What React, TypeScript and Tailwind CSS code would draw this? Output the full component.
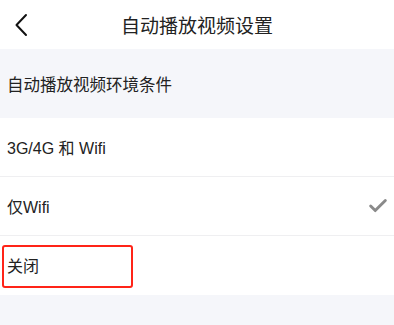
import { Check } from 'lucide-react';

const font = { fontFamily: '"Liberation Sans", "Noto Sans CJK SC", sans-serif' };

export default function App() {
  return (
    <div className="relative h-[325px] w-[394px] overflow-hidden bg-[#f5f6fa] text-[#222]" style={font}>
      <header className="relative flex h-[49px] items-center justify-center bg-white pt-[3px]">
        <svg className="absolute left-[14px] top-[13px]" width="14" height="24" viewBox="0 0 14 24" fill="none">
          <path d="M12 2 L2.5 12 L12 22" stroke="#111" strokeWidth="2" strokeLinecap="round" strokeLinejoin="round" />
        </svg>
        <h1 className="text-[19px] leading-none">自动播放视频设置</h1>
      </header>

      <div className="flex h-[69px] items-center px-[7px] pt-[3px] text-[16.5px]">自动播放视频环境条件</div>

      <div className="bg-white">
        <div className="flex h-[59px] items-center border-b border-[#efeff1] px-[7px] pt-[3px] text-[16px]">3G/4G 和 Wifi</div>
        <div className="flex h-[59px] items-center justify-between border-b border-[#efeff1] pl-[7px] pr-[5px] pt-[3px] text-[16px]">
          <span>仅Wifi</span>
          <Check size={22} strokeWidth={3.2} className="-mt-[3px] text-[#8a8a8a]" />
        </div>
        <div className="flex h-[59px] items-center px-[7px] pt-[3px] text-[16px]">关闭</div>
      </div>

      <div className="absolute left-[2px] top-[245px] h-[43px] w-[131px] rounded-[3px] border-2 border-[#ff2418]" />
    </div>
  );
}
